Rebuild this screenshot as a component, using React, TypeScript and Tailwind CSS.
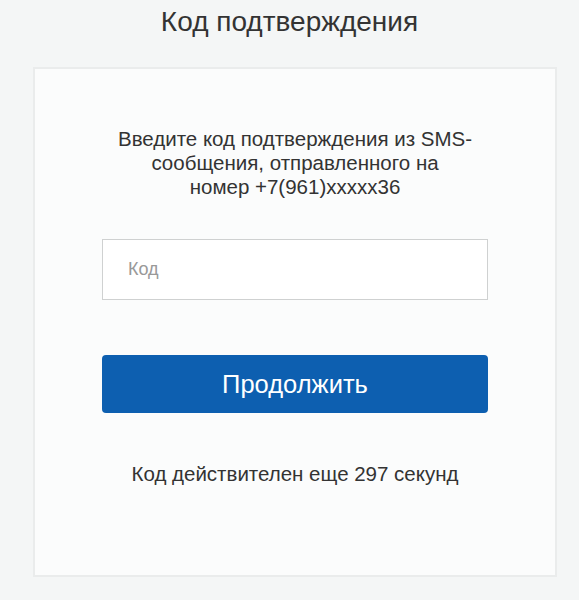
export default function App() {
  return (
    <div className="min-h-[600px] bg-[#f4f6f6] pt-[6px] font-['Liberation_Sans',Arial,sans-serif] text-[#333]">
      <h1 className="text-center text-[28px] leading-[32px] font-normal">Код подтверждения</h1>

      <div className="ml-[33px] mt-[29px] w-[524px] border-2 border-[#eaecec] bg-[#fbfcfc] px-[67px] pt-[58px] pb-[89px]">
        <p className="text-center text-[20.5px] leading-[24px]">
          <span className="block">Введите код подтверждения из SMS-</span>
          <span className="block">сообщения, отправленного на</span>
          <span className="block">номер +7(961)xxxxx36</span>
        </p>

        <input
          type="text"
          placeholder="Код"
          className="mt-[40px] block h-[61px] w-full border border-[#cfd1d1] bg-white px-[25px] text-[18px] text-[#333] outline-none placeholder:text-[#999]"
        />

        <button
          type="button"
          className="mt-[55px] block h-[58px] w-full rounded-[4px] bg-[#0d5fb0] text-[25.5px] text-white"
        >
          Продолжить
        </button>

        <p className="mt-[49px] text-center text-[20.5px] leading-[24px]">Код действителен еще 297 секунд</p>
      </div>
    </div>
  );
}
